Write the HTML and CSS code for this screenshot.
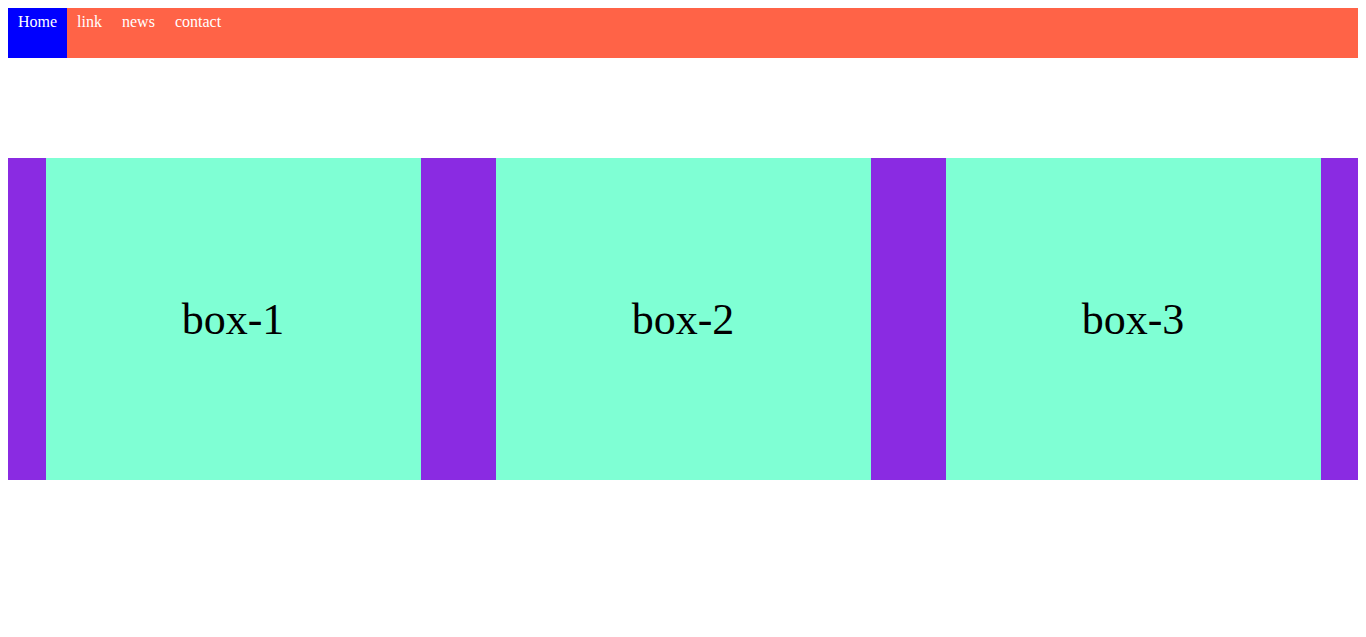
FILE: index.html
```html
<!DOCTYPE html>
<html lang="en">
<head>
  <meta charset="UTF-8">
  <meta name="viewport" content="width=device-width, initial-scale=1.0">
  <title>Boxes</title>
  <link rel="stylesheet" href="styles.css">
</head>
<body>
  <nav class="navbar">
    <ul>
      <li><a href="#" class="active">Home</a></li>
      <li><a href="#">link</a></li>
      <li><a href="#">news</a></li>
      <li><a href="#">contact</a></li>
    </ul>
  </nav>

  <div class="container">
    <div class="box">box-1</div>
    <div class="box">box-2</div>
    <div class="box">box-3</div>
  </div>
</body>
</html>
```

FILE: styles.css
```css
body {
  margin: 8px;
  font-family: 'Liberation Serif', 'Times New Roman', serif;
}

/* Navbar */
.navbar {
  background-color: tomato;
  height: 50px;
}

.navbar ul {
  list-style: none;
  margin: 0;
  padding: 0;
  display: flex;
  height: 100%;
}

.navbar a {
  display: block;
  height: 100%;
  box-sizing: border-box;
  padding: 5px 10px;
  color: #fff;
  text-decoration: none;
  font-size: 16px;
}

.navbar a.active {
  background-color: blue;
}

/* Boxes */
.container {
  margin-top: 100px;
  background-color: blueviolet;
  display: flex;
  justify-content: space-around;
}

.box {
  width: 375px;
  height: 322px;
  background-color: aquamarine;
  display: flex;
  justify-content: center;
  align-items: center;
  font-size: 44px;
}
```
